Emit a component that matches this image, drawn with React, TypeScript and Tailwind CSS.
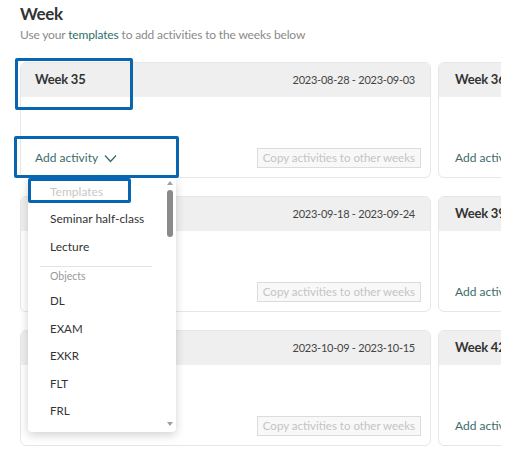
import React from "react";

type Week = { label: string; range: string; next: string };

const ROWS: Week[] = [
  { label: "Week 35", range: "2023-08-28 - 2023-09-03", next: "Week 36" },
  { label: "Week 38", range: "2023-09-18 - 2023-09-24", next: "Week 39" },
  { label: "Week 41", range: "2023-10-09 - 2023-10-15", next: "Week 42" },
];

const OBJECTS = ["DL", "EXAM", "EXKR", "FLT", "FRL"];

function Chevron() {
  return (
    <svg width="13" height="9" viewBox="0 0 13 9" fill="none" className="ml-[6px]">
      <path d="M1 1.5 6.5 7.5 12 1.5" stroke="currentColor" strokeWidth="1.3" strokeLinejoin="round" />
    </svg>
  );
}

function WeekCard({ week }: { week: Week }) {
  return (
    <div className="flex gap-[7px]">
      <div className="w-[411px] h-[116px] shrink-0 rounded-md border border-[#e6e6e6] overflow-hidden flex flex-col">
        <div className="h-[34px] bg-[#efefef] flex items-center justify-between pl-[14px] pr-[15px]">
          <span className="text-[13px] font-bold tracking-[-0.2px] text-[#333]">{week.label}</span>
          <span className="text-[11px] tracking-[-0.25px] text-[#444]">{week.range}</span>
        </div>
        <div className="flex-1 flex items-end justify-between pl-[14px] pr-[9px] pb-[9px]">
          <span className="text-[12px] text-[#3d6b6b] flex items-center h-[20px]">
            Add activity
            <Chevron />
          </span>
          <span className="h-[20px] px-[5px] border border-[#dcdcdc] bg-[#f8f8f8] text-[11.5px] text-[#c4c4c4] flex items-center">
            Copy activities to other weeks
          </span>
        </div>
      </div>
      <div className="w-[200px] h-[116px] shrink-0 rounded-md border border-[#e6e6e6] overflow-hidden flex flex-col">
        <div className="h-[34px] bg-[#efefef] flex items-center px-[16px]">
          <span className="text-[13px] font-bold tracking-[-0.2px] text-[#333]">{week.next}</span>
        </div>
        <div className="flex-1 flex items-end pl-[16px] pb-[9px]">
          <span className="text-[12px] text-[#3d6b6b] h-[20px] flex items-center">Add activity</span>
        </div>
      </div>
    </div>
  );
}

function Dropdown() {
  return (
    <div className="absolute left-[28px] top-[178px] w-[148px] h-[254px] bg-white rounded-sm shadow-[0_3px_10px_rgba(0,0,0,0.18)] flex">
      <div className="flex-1 pt-[1px]">
        <div className="h-[25px] pl-[22px] flex items-center text-[12px] text-[#c8c8c8]">Templates</div>
        <div className="h-[29px] pl-[22px] flex items-center text-[12px] text-[#333]">Seminar half-class</div>
        <div className="h-[28px] pl-[22px] flex items-center text-[12px] text-[#333]">Lecture</div>
        <div className="mx-[12px] mt-[5px] border-t border-[#e3e3e3]" />
        <div className="h-[20px] pl-[22px] flex items-center text-[10.5px] text-[#999]">Objects</div>
        {OBJECTS.map((o) => (
          <div key={o} className="h-[27.5px] pl-[22px] flex items-center text-[11.5px] text-[#333]">
            {o}
          </div>
        ))}
      </div>
      <div className="w-[12px] flex flex-col items-center pt-[3px] pb-[6px]">
        <svg width="6" height="4" viewBox="0 0 6 4"><path d="M0 4 3 0 6 4Z" fill="#a0a0a0" /></svg>
        <div className="mt-[5px] w-[6px] h-[47px] rounded-full bg-[#8a8a8a]" />
        <div className="flex-1" />
        <svg width="6" height="4" viewBox="0 0 6 4"><path d="M0 0 6 0 3 4Z" fill="#a0a0a0" /></svg>
      </div>
    </div>
  );
}

export default function App() {
  return (
    <div className="relative w-[520px] h-[467px] overflow-hidden bg-white font-['Lato',sans-serif]">
      <div className="pl-5 pt-[2px]">
        <h2 className="text-[17px] font-bold tracking-[-0.3px] text-[#333] leading-[24px]">Week</h2>
        <p className="text-[12px] tracking-[-0.15px] leading-[16px] text-[#8a8a8a] mt-[1px]">
          Use your <span className="text-[#2f6f6a]">templates</span> to add activities to the weeks below
        </p>
        <div className="mt-[19px] w-[481px] overflow-hidden flex flex-col gap-[18px]">
          {ROWS.map((w) => (
            <WeekCard key={w.label} week={w} />
          ))}
        </div>
      </div>

      <Dropdown />

      {/* highlight boxes */}
      <div className="absolute left-[15px] top-[58px] w-[118px] h-[52px] border-[3px] border-[#0866b0] rounded-[2px]" />
      <div className="absolute left-[14px] top-[136px] w-[165px] h-[42px] border-[3px] border-[#0866b0] rounded-[2px]" />
      <div className="absolute left-[28px] top-[178px] w-[103px] h-[25px] border-[3px] border-[#0866b0] rounded-[2px]" />
    </div>
  );
}
